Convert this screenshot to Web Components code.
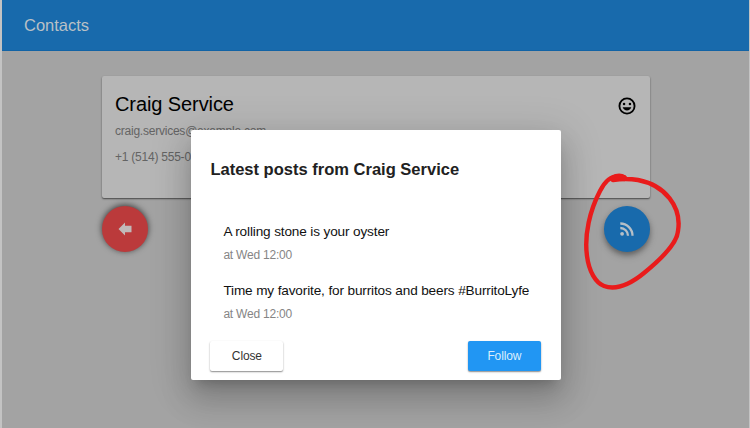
<!DOCTYPE html>
<html lang="en">
<head>
<meta charset="utf-8">
<title>Contacts</title>
<style>
html,body{margin:0;height:100%;overflow:hidden}
body{font-family:"Liberation Sans",Arial,sans-serif;background:#a3a3a3}
</style>
</head>
<body>
<contacts-app></contacts-app>
<script>
const define = (name, html) => {
  const t = document.createElement('template');
  t.innerHTML = html;
  customElements.define(name, class extends HTMLElement {
    constructor() {
      super();
      this.attachShadow({mode: 'open'}).appendChild(t.content.cloneNode(true));
    }
  });
};

define('app-bar', `<style>
:host{display:flex;align-items:center;box-sizing:border-box;height:51px;padding:0 22px;background:#186aac;border-bottom:1px solid #1263a5;color:#b9c0c6;font-size:16.5px;line-height:20px}
</style><slot></slot>`);

define('contact-card', `<style>
:host{display:flex;justify-content:space-between;box-sizing:border-box;width:548.5px;height:122px;padding:17px 13px 0 13.5px;background:#b6b6b6;border-radius:2px;box-shadow:0 1px 2px rgba(0,0,0,.42),0 1px 1px rgba(0,0,0,.2)}
.name{font-size:20px;letter-spacing:-.09px;line-height:22px;color:#000}
.info{font-size:12px;letter-spacing:-.23px;line-height:16px;color:#646464;margin-top:8px}
.info + .info{margin-top:10px}
svg{width:20px;height:20px;margin-top:2.5px}
</style><div><div class="name"><slot name="name"></slot></div>
<div class="info"><slot name="email"></slot></div><div class="info"><slot name="phone"></slot></div></div>
<svg viewBox="0 0 24 24"><circle cx="12" cy="12" r="9.1" fill="none" stroke="#000" stroke-width="2.200"/><circle cx="8.5" cy="9.5" r="1.5"/><circle cx="15.5" cy="9.5" r="1.5"/><path d="M6.8 13.6h10.4c-.7 2.2-2.7 3.9-5.2 3.9s-4.5-1.7-5.2-3.9z"/></svg>`);

define('round-button', `<style>
:host{display:flex;align-items:center;justify-content:center;width:46.3px;height:46px;border-radius:50%;background:var(--fill);box-shadow:var(--shade)}
</style><slot></slot>`);

define('raised-button', `<style>
:host{display:flex;align-items:center;justify-content:center;width:73px;height:30px;border-radius:2px;background:var(--fill,#fff);color:var(--ink,#333);font-size:12px;letter-spacing:-.12px;line-height:16px;box-shadow:0 1px 2px rgba(0,0,0,.32),0 1px 1px rgba(0,0,0,.18)}
</style><slot></slot>`);

define('post-item', `<style>
:host{display:block;height:59.5px;padding-left:13px}
.text{font-size:13.6px;letter-spacing:-.14px;line-height:18px;color:#111;white-space:nowrap}
.time{font-size:12px;letter-spacing:-.22px;line-height:16px;color:#858585;margin-top:6px}
</style><div class="text"><slot></slot></div><div class="time"><slot name="time"></slot></div>`);

define('posts-dialog', `<style>
:host{display:flex;flex-direction:column;box-sizing:border-box;width:370px;height:250.5px;padding:28px 20px 9.5px 19.5px;background:#fff;border-radius:2px;box-shadow:0 9px 12px -6px rgba(0,0,0,.2),0 20px 31px 2px rgba(0,0,0,.14),0 7px 38px 7px rgba(0,0,0,.12)}
h2{margin:0 0 41.5px;font-size:16.52px;line-height:24px;color:#212121;white-space:nowrap}
footer{display:flex;justify-content:space-between;margin-top:auto}
</style><h2><slot name="title"></slot></h2><slot></slot><footer><slot name="close"></slot><slot name="follow"></slot></footer>`);

/* Freehand red loop drawn over the feed button */
define('marker-loop', `<style>
:host{position:absolute;left:568px;top:160px;width:130px;height:140px;pointer-events:none}
svg{display:block}
</style><svg width="130" height="140" viewBox="0 0 130 140" fill="none" stroke="#e91b1b" stroke-linecap="round" stroke-linejoin="round">
<path stroke-width="4.4" d="M54 17C44 14 36 19 30 31C20 50 14 75 17 96C19 112 26 123 34 126C48 131 63 122 74 113C90 100 107 84 108 71C112 47 95 25 68 20C59 18.500 51 18.800 43 20"/>
<path stroke-width="6" d="M43 18.500Q49 15 54 18"/></svg>`);

define('contacts-app', `<style>
:host{display:block;position:relative;box-sizing:border-box;height:100vh;overflow:hidden;background:#a3a3a3;border-left:2px solid #c3c3c3;border-right:1px solid #c3c3c3}
:host::before{content:"";position:absolute;left:-2px;top:0;width:1px;height:100%;background:#adadad}
main{display:flex;flex-direction:column;width:548.5px;margin:25px 0 0 99.5px;gap:8px}
nav{display:flex;justify-content:space-between}
aside{position:absolute;left:188.9px;top:129.5px}
.back{--fill:#bb3a3b;--shade:0 -1px 6px rgba(0,0,0,.65)}
.feed{--fill:#186aac;--shade:0 3px 5px rgba(0,0,0,.3),0 4px 8px rgba(0,0,0,.15)}
.follow{--fill:#2196f3;--ink:#dceefd}
</style>
<app-bar>Contacts</app-bar>
<main><contact-card><span slot="name">Craig Service</span><span slot="email">craig.services@example.com</span><span slot="phone">+1 (514) 555-0199</span></contact-card>
<nav><round-button class="back"><svg width="14" height="14" viewBox="0 0 14 14"><path fill="#c1b9b9" d="M.5 7 7 .5V3.700h6.500v6.600H7v3.200z"/></svg></round-button>
<round-button class="feed"><svg width="14" height="14" viewBox="0 0 14 14"><circle cx="2.100" cy="11.800" r="1.900" fill="#b6bfc7"/><path fill="none" stroke="#b6bfc7" stroke-width="2.300" d="M.3 6A7.700 7.700 0 0 1 8 13.700M.3 1.500A12.200 12.200 0 0 1 12.500 13.700"/></svg></round-button></nav></main>
<aside><posts-dialog><span slot="title">Latest posts from Craig Service</span>
<post-item>A rolling stone is your oyster<span slot="time">at Wed 12:00</span></post-item>
<post-item>Time my favorite, for burritos and beers #BurritoLyfe<span slot="time">at Wed 12:00</span></post-item>
<raised-button slot="close">Close</raised-button><raised-button class="follow" slot="follow">Follow</raised-button></posts-dialog></aside>
<marker-loop></marker-loop>`);
</script>
</body>
</html>
